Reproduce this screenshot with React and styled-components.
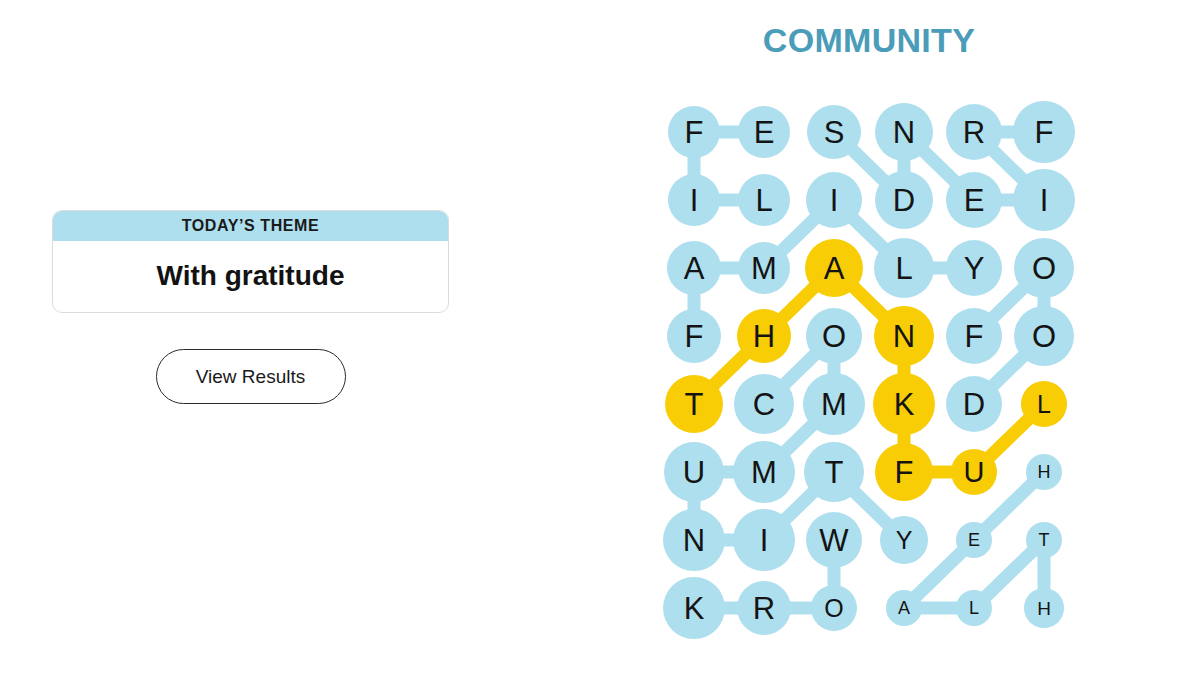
import React from 'react'
import styled, { createGlobalStyle } from 'styled-components'

const BLUE = '#aedfee'
const YELLOW = '#f8cd05'
const COL_W = 70
const ROW_H = 68

const GlobalStyle = createGlobalStyle`
  html, body {
    margin: 0;
    padding: 0;
    background: #ffffff;
    font-family: "Liberation Sans", Arial, sans-serif;
    color: #121212;
  }
`

const Page = styled.main`
  width: 1200px;
  height: 675px;
  display: grid;
  grid-template-columns: 501px 1fr;
  overflow: hidden;
`

const LeftColumn = styled.section`
  padding: 210px 0 0 52px;
  display: flex;
  flex-direction: column;
  align-items: center;
  width: 397px;
`

const ThemeCard = styled.div`
  width: 100%;
  box-sizing: border-box;
  border: 1px solid #dcdcdc;
  border-radius: 10px;
  overflow: hidden;
  background: #fff;
`

const ThemeHeader = styled.div`
  height: 30px;
  background: ${BLUE};
  display: flex;
  align-items: center;
  justify-content: center;
  font-size: 16px;
  font-weight: 700;
  letter-spacing: 0.6px;
  color: #1a1a1a;
`

const ThemeTitle = styled.div`
  height: 71px;
  display: flex;
  align-items: center;
  justify-content: center;
  font-size: 28px;
  font-weight: 700;
  color: #121212;
  padding-bottom: 2px;
  box-sizing: border-box;
`

const ResultsButton = styled.button`
  margin-top: 36px;
  width: 190px;
  height: 55px;
  border: 1px solid #2a2a2a;
  border-radius: 28px;
  background: #fff;
  font-family: inherit;
  font-size: 19px;
  color: #1a1a1a;
  cursor: pointer;
`

const RightColumn = styled.section`
  padding-left: 158px;
  display: flex;
  flex-direction: column;
  align-items: flex-start;
`

const Title = styled.h1`
  width: ${COL_W * 6}px;
  margin: 20px 0 0;
  text-align: center;
  font-size: 34px;
  line-height: 40px;
  font-weight: 700;
  letter-spacing: 0.3px;
  color: #4a9cb9;
`

const Board = styled.div`
  position: relative;
  margin-top: 38px;
  display: grid;
  grid-template-columns: repeat(6, ${COL_W}px);
  grid-auto-rows: ${ROW_H}px;
`

const Lines = styled.svg`
  position: absolute;
  inset: 0;
  z-index: 0;
`

const Cell = styled.div`
  position: relative;
  z-index: 1;
  display: flex;
  align-items: center;
  justify-content: center;
`

const Letter = styled.button`
  width: ${p => p.$r * 2}px;
  height: ${p => p.$r * 2}px;
  flex: none;
  border: none;
  padding: 0;
  border-radius: 50%;
  background: ${p => (p.$gold ? YELLOW : BLUE)};
  font-family: "Liberation Sans", Arial, sans-serif;
  font-size: ${p => p.$fs}px;
  line-height: 1;
  color: #141414;
  display: flex;
  align-items: center;
  justify-content: center;
`

const letters = [
  'FESNRF',
  'ILIDEI',
  'AMALYO',
  'FHONFO',
  'TCMKDL',
  'UMTFUH',
  'NIWYET',
  'KROALH',
]

const radii = [
  [26, 26, 27, 29, 28, 31],
  [26, 26, 28, 29, 28, 31],
  [27, 26, 29, 30, 28, 30],
  [27, 27, 28, 30, 28, 30],
  [29, 30, 31, 31, 28, 23],
  [30, 31, 30, 29, 23, 18],
  [31, 31, 28, 24, 18, 18],
  [31, 27, 23, 18, 18, 20],
]

// THANKFUL spangram
const goldPath = [[4, 0], [3, 1], [2, 2], [3, 3], [4, 3], [5, 3], [5, 4], [4, 5]]

const bluePaths = [
  [[1, 1], [1, 0], [0, 0], [0, 1]], // LIFE
  [[0, 5], [0, 4], [1, 5], [1, 4], [0, 3], [1, 3], [0, 2]], // FRIENDS
  [[3, 0], [2, 0], [2, 1], [1, 2], [2, 3], [2, 4]], // FAMILY
  [[3, 4], [2, 5], [3, 5], [4, 4]], // FOOD
  [[4, 1], [3, 2], [4, 2], [5, 1], [5, 0], [6, 0], [6, 1], [5, 2], [6, 3]], // COMMUNITY
  [[6, 2], [7, 2], [7, 1], [7, 0]], // WORK
  [[5, 5], [6, 4], [7, 3], [7, 4], [6, 5], [7, 5]], // HEALTH
]

const isGold = (r, c) => goldPath.some(([gr, gc]) => gr === r && gc === c)

const fontFor = (r, c, rad) => {
  if (r === 5 && c === 4) return 29
  if (rad >= 26) return 31
  if (rad >= 22) return 25
  return rad >= 20 ? 19 : 18
}

const toPoints = path =>
  path.map(([r, c]) => `${c * COL_W + COL_W / 2},${r * ROW_H + ROW_H / 2}`).join(' ')

const App = () => (
  <>
    <GlobalStyle />
    <Page>
      <LeftColumn>
        <ThemeCard>
          <ThemeHeader>TODAY’S THEME</ThemeHeader>
          <ThemeTitle>With gratitude</ThemeTitle>
        </ThemeCard>
        <ResultsButton>View Results</ResultsButton>
      </LeftColumn>

      <RightColumn>
        <Title>COMMUNITY</Title>
        <Board>
          <Lines width={COL_W * 6} height={ROW_H * 8}>
            {bluePaths.map((p, i) => (
              <polyline key={i} points={toPoints(p)} fill="none" stroke={BLUE} strokeWidth="13" strokeLinejoin="round" />
            ))}
            <polyline points={toPoints(goldPath)} fill="none" stroke={YELLOW} strokeWidth="13" strokeLinejoin="round" />
          </Lines>
          {letters.map((row, r) =>
            row.split('').map((ch, c) => (
              <Cell key={`${r}-${c}`}>
                <Letter $r={radii[r][c]} $fs={fontFor(r, c, radii[r][c])} $gold={isGold(r, c)}>
                  {ch}
                </Letter>
              </Cell>
            ))
          )}
        </Board>
      </RightColumn>
    </Page>
  </>
)

export default App
